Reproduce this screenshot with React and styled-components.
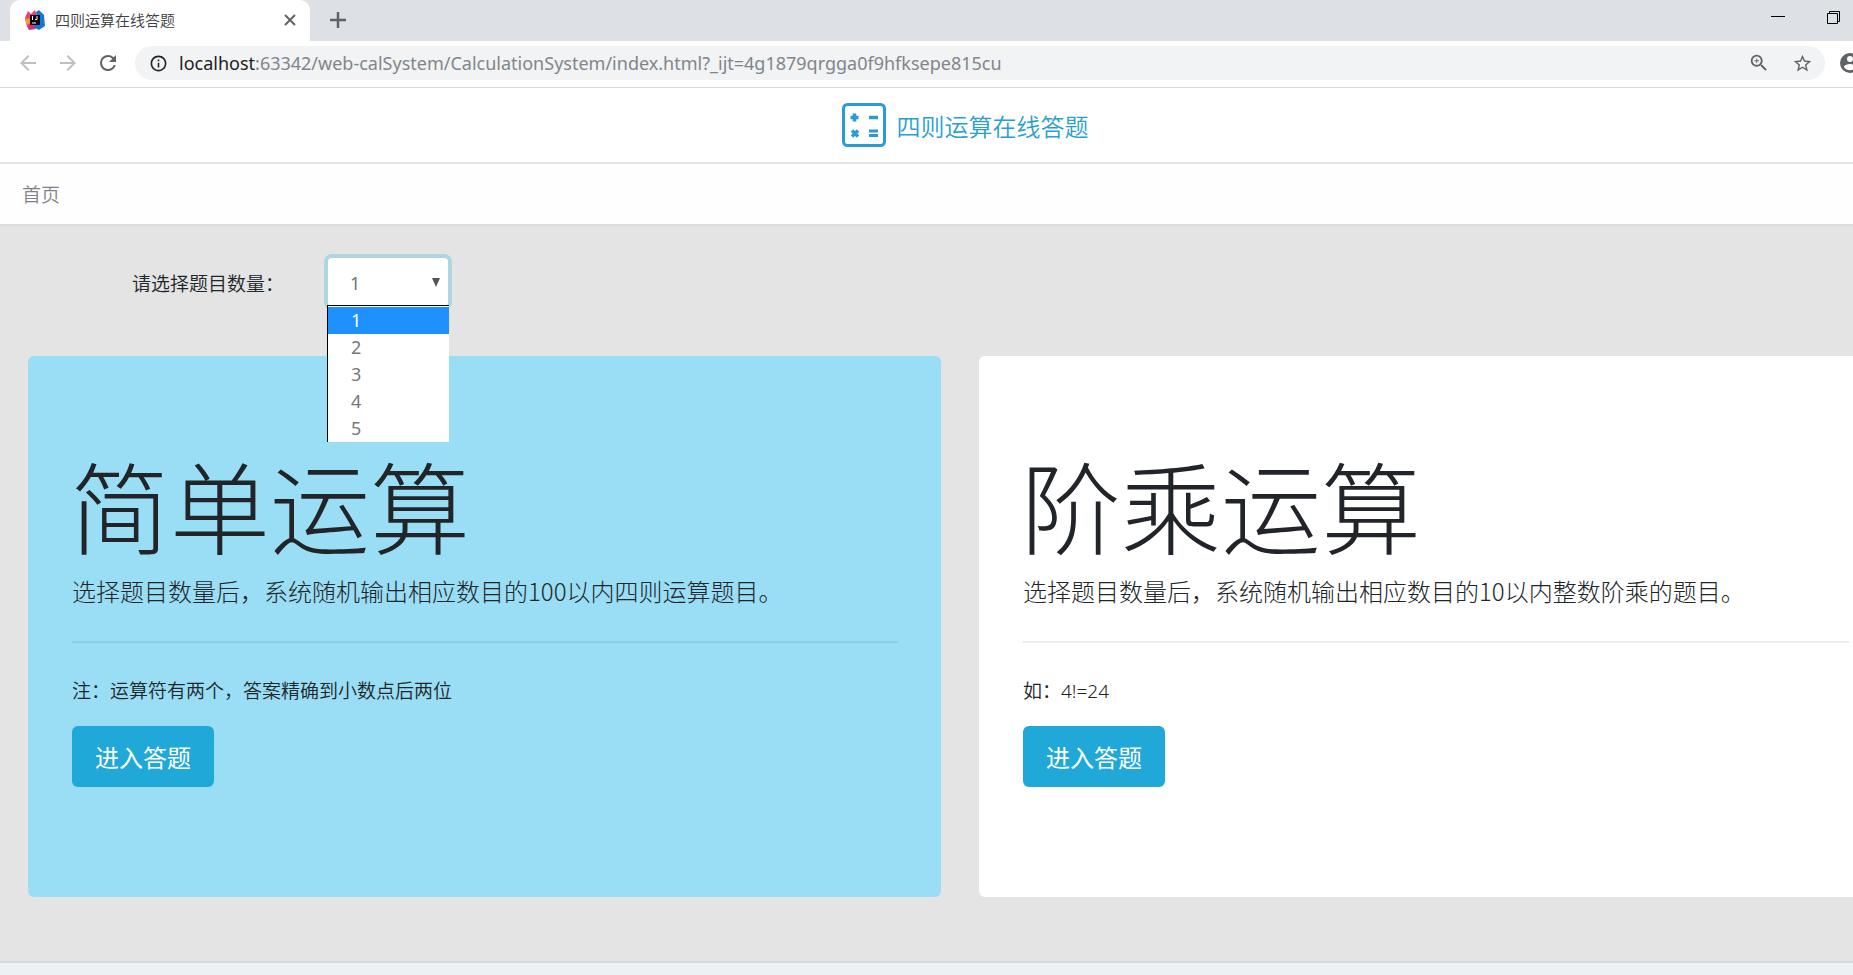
import React, { useState } from 'react'
import styled, { createGlobalStyle } from 'styled-components'

const GlobalStyle = createGlobalStyle`
  * { box-sizing: border-box; }
  body {
    margin: 0;
    font-family: 'Noto Sans', 'Noto Sans CJK SC', sans-serif;
    font-size: 19px;
    line-height: 29px;
    color: #212529;
    background: #edf1f4;
  }
  h1, p, ul { margin: 0; padding: 0; font-weight: inherit; }
  button, select { font-family: inherit; }
  svg { display: block; flex: none; }
`

const Viewport = styled.div`
  overflow: hidden;
`
// the window is a little wider than the screen, its right edge is cut off
const Window = styled.div`
  width: calc(100% + 67px);
`

/* browser chrome */
const TabStrip = styled.div`
  display: flex;
  align-items: flex-end;
  height: 41px;
  padding: 0 66px 0 10px;
  background: #dde1e6;
`
const Tab = styled.div`
  display: flex;
  align-items: center;
  width: 300px;
  height: 41px;
  padding: 0 12px 2px 15px;
  border-radius: 10px 10px 0 0;
  background: #fff;
  color: #3c4043;
`
const TabTitle = styled.span`
  flex: 1;
  margin-left: 10px;
  font-family: 'Noto Sans CJK SC', sans-serif;
  font-size: 15px;
  font-weight: 350;
`
const IconButton = styled.button`
  display: flex;
  align-items: center;
  justify-content: center;
  width: ${props => props.$size || 40}px;
  height: ${props => props.$size || 40}px;
  padding: 0;
  border: 0;
  background: none;
  color: ${props => props.$color || '#5f6368'};
`
const NewTab = styled(IconButton)`
  margin-left: 8px;
  padding-bottom: 2px;
`
const WindowButtons = styled.div`
  display: flex;
  gap: 16px;
  margin-left: auto;
  padding-bottom: 3px;
`
const Toolbar = styled.div`
  display: flex;
  align-items: center;
  height: 47px;
  padding: 0 58px 2px 8px;
  border-bottom: 1px solid #d5d7da;
  background: #fff;
`
const AddressBar = styled.div`
  display: flex;
  align-items: center;
  gap: 3px;
  flex: 1;
  height: 34px;
  margin: 0 13px 0 7px;
  padding: 0 3px 0 14px;
  border-radius: 17px;
  background: #f1f3f4;
`
const Url = styled.span`
  flex: 1;
  margin-left: 8px;
  font-family: 'Noto Sans', sans-serif;
  font-size: 18px;
  color: #80868b;
  white-space: nowrap;
  b { font-weight: 400; color: #202124; }
`

/* page */
const Header = styled.header`
  display: flex;
  align-items: center;
  justify-content: center;
  gap: 11px;
  height: 76px;
  padding-left: 10px;
  border-bottom: 2px solid #e1e3e5;
  background: #fff;
`
const Brand = styled.h1`
  padding-top: 4px;
  font-size: 24px;
  font-weight: 350;
  line-height: 36px;
  color: #2a9fd0;
`
const Nav = styled.nav`
  display: flex;
  align-items: center;
  height: 62px;
  padding: 2px 22px 0;
  border-bottom: 2px solid #d8dcdf;
  background: #fefefe;
  a { color: #808386; font-weight: 350; text-decoration: none; }
`
const Main = styled.main`
  padding: 32px 28px 64px;
  border-bottom: 2px solid #d5d9dc;
  background: #e4e4e4;
`
const Question = styled.div`
  display: flex;
  align-items: center;
  padding-left: 104px;
  margin-bottom: 50px;
`
const Label = styled.label`
  width: 196px;
  padding-top: 4px;
  font-weight: 350;
`
const Picker = styled.div`
  position: relative;
  width: 120px;
`
const Select = styled.select`
  appearance: none;
  display: block;
  width: 100%;
  height: 48px;
  padding: 2px 22px 0;
  border: 0;
  border-radius: 4px;
  outline: none;
  box-shadow: 0 0 0 4px #aed5e2;
  background: #fff;
  font-size: 18px;
  color: #777;
`
const Arrow = styled.svg`
  position: absolute;
  top: 20px;
  right: 8px;
  pointer-events: none;
`
const Options = styled.ul`
  position: absolute;
  z-index: 2;
  top: 47px;
  left: -1px;
  right: -1px;
  padding-top: 1px;
  border: solid #000;
  border-width: 1px 0 0 1px;
  background: #fff;
  list-style: none;
`
const Option = styled.li`
  padding-left: 23px;
  font-size: 18px;
  line-height: 27px;
  color: ${props => (props.$active ? '#fff' : '#777')};
  background: ${props => (props.$active ? '#1e90ff' : '#fff')};
`
const Cards = styled.div`
  display: grid;
  grid-template-columns: 1fr 1fr;
  gap: 38px;
`
const Card = styled.section`
  padding: 96px 43px 110px 44px;
  border-radius: 6px;
  background: ${props => props.$color};
`
const CardTitle = styled.h1`
  margin-left: -2px;
  font-size: 100px;
  font-weight: 200;
  line-height: 112px;
`
const Lead = styled.p`
  font-family: 'Noto Sans CJK SC', sans-serif;
  font-size: 24px;
  font-weight: 200;
  line-height: 36px;
  margin-top: 9px;
`
const Rule = styled.hr`
  margin: 32px 0 34px;
  border: 0;
  border-top: 2px solid rgba(0, 0, 0, 0.07);
`
const Note = styled.p`
  font-weight: 350;
`
const Enter = styled.button`
  height: 61px;
  margin-top: 20px;
  padding: 3px 23px 0;
  border: 0;
  border-radius: 6px;
  background: #20a8d8;
  color: #fff;
  font-size: 24px;
  line-height: 36px;
`

const modes = [
  {
    title: '简单运算',
    lead: '选择题目数量后，系统随机输出相应数目的100以内四则运算题目。',
    note: '注：运算符有两个，答案精确到小数点后两位',
    color: '#99def4',
  },
  {
    title: '阶乘运算',
    lead: '选择题目数量后，系统随机输出相应数目的10以内整数阶乘的题目。',
    note: '如：4!=24',
    color: '#fff',
  },
]
const counts = [1, 2, 3, 4, 5]

const Icon = ({ size = 24, d }) => (
  <svg width={size} height={size} viewBox="0 0 24 24" fill="currentColor"><path d={d} /></svg>
)

const Favicon = () => (
  <svg width="20" height="20" viewBox="0 0 20 20">
    <path d="M0 8l3-7 3 3 4-4 2 6-4 10-6 1z" fill="#ee3f6e" />
    <path d="M0 10l4-2 2 4-4 3z" fill="#f79a3e" />
    <path d="M11 2l3-2 5 5 1 11-6 4-6-3 4-8z" fill="#1676d2" />
    <path d="M2 16l6-2 3 5-7 1z" fill="#d42f72" />
    <rect x="5" y="5" width="10" height="10" fill="#0b0508" />
    <path d="M7.500 6v4M12 6v3.500h-2M7 13h4" stroke="#fff" fill="none" />
  </svg>
)

const Logo = () => (
  <svg width="44" height="44" viewBox="0 0 44 44" stroke="#2a9bd4" fill="none">
    <rect x="1.500" y="1.500" width="41" height="41" rx="4" strokeWidth="3" />
    <path d="M8.500 14.500h8M12.500 10.500v8M27 14.500h9" strokeWidth="3.500" />
    <path d="M27 28h9M27 32.500h9" strokeWidth="3" />
    <path d="M10 27.500l6 6M16 27.500l-6 6" strokeWidth="3.500" />
  </svg>
)

function App() {
  const [count, setCount] = useState(1)
  return (
    <Viewport>
      <GlobalStyle />
      <Window>
        <TabStrip>
          <Tab>
            <Favicon />
            <TabTitle>四则运算在线答题</TabTitle>
            <IconButton $size={16} aria-label="关闭">
              <svg width="12" height="12" viewBox="0 0 12 12" stroke="currentColor" strokeWidth="2"><path d="M1 1l10 10M11 1L1 11" /></svg>
            </IconButton>
          </Tab>
          <NewTab aria-label="新标签页">
            <svg width="16" height="16" viewBox="0 0 16 16" stroke="currentColor" strokeWidth="2.500"><path d="M8 0v16M0 8h16" /></svg>
          </NewTab>
          <WindowButtons>
            <IconButton aria-label="最小化" $color="#000">
              <svg width="14" height="14" viewBox="0 0 14 14" stroke="currentColor"><path d="M0 5.500h14" /></svg>
            </IconButton>
            <IconButton aria-label="还原" $color="#000">
              <svg width="14" height="14" viewBox="0 0 14 14" stroke="currentColor" fill="none"><path d="M.5 2.500h10v10H.5zM2.500 2.500v-2h10v10h-2" /></svg>
            </IconButton>
          </WindowButtons>
        </TabStrip>
        <Toolbar>
          <IconButton aria-label="后退" $color="#bdc0c4"><Icon d="M20 11H7.830l5.590-5.590L12 4l-8 8 8 8 1.410-1.410L7.830 13H20v-2z" /></IconButton>
          <IconButton aria-label="前进" $color="#bdc0c4"><Icon d="M12 4l-1.410 1.410L16.170 11H4v2h12.170l-5.580 5.590L12 20l8-8z" /></IconButton>
          <IconButton aria-label="刷新"><Icon d="M17.650 6.350A7.958 7.958 0 0 0 12 4a8 8 0 1 0 7.730 10h-2.080A6 6 0 1 1 12 6c1.660 0 3.140.69 4.220 1.780L13 11h7V4l-2.350 2.350z" /></IconButton>
          <AddressBar>
            <Icon size={19} d="M11 17h2v-6h-2v6zm1-15C6.480 2 2 6.480 2 12s4.480 10 10 10 10-4.480 10-10S17.520 2 12 2zm0 18a8 8 0 1 1 0-16 8 8 0 0 1 0 16zM11 9h2V7h-2v2z" />
            <Url><b>localhost</b>:63342/web-calSystem/CalculationSystem/index.html?_ijt=4g1879qrgga0f9hfksepe815cu</Url>
            <IconButton aria-label="缩放"><Icon size={22} d="M15.500 14h-.79l-.28-.27A6.470 6.470 0 0 0 16 9.500 6.500 6.500 0 1 0 9.500 16c1.610 0 3.090-.59 4.230-1.570l.27.28v.79l5 4.990L20.490 19l-4.990-5zm-6 0a4.500 4.500 0 1 1 0-9 4.500 4.500 0 0 1 0 9zM12 10h-2v2H9v-2H7V9h2V7h1v2h2v1z" /></IconButton>
            <IconButton aria-label="收藏"><Icon size={21} d="M22 9.240l-7.190-.62L12 2 9.190 8.630 2 9.240l5.460 4.730L5.820 21 12 17.270 18.180 21l-1.630-7.030L22 9.240zM12 15.400l-3.760 2.270 1-4.280-3.320-2.880 4.380-.38L12 6.100l1.710 4.040 4.380.38-3.320 2.880 1 4.280L12 15.400z" /></IconButton>
          </AddressBar>
          <IconButton $size={24} aria-label="用户"><Icon size={24} d="M12 2a10 10 0 1 0 0 20 10 10 0 0 0 0-20zm0 3a3 3 0 1 1 0 6 3 3 0 0 1 0-6zm0 14.200a7.200 7.200 0 0 1-6-3.220c.03-1.990 4-3.080 6-3.080s5.970 1.090 6 3.080a7.200 7.200 0 0 1-6 3.220z" /></IconButton>
        </Toolbar>
        <Header>
          <Logo />
          <Brand>四则运算在线答题</Brand>
        </Header>
        <Nav><a href="#">首页</a></Nav>
        <Main>
          <Question>
            <Label htmlFor="count">请选择题目数量：</Label>
            <Picker>
              <Select id="count" value={count} onChange={e => setCount(Number(e.target.value))}>
                {counts.map(n => <option key={n}>{n}</option>)}
              </Select>
              <Arrow width="8" height="9" viewBox="0 0 8 9"><path d="M0 0h8L4 9z" fill="#555" /></Arrow>
              <Options role="listbox">
                {counts.map(n => (
                  <Option key={n} role="option" $active={n === count} onClick={() => setCount(n)}>{n}</Option>
                ))}
              </Options>
            </Picker>
          </Question>
          <Cards>
            {modes.map(mode => (
              <Card key={mode.title} $color={mode.color}>
                <CardTitle>{mode.title}</CardTitle>
                <Lead>{mode.lead}</Lead>
                <Rule />
                <Note>{mode.note}</Note>
                <Enter>进入答题</Enter>
              </Card>
            ))}
          </Cards>
        </Main>
      </Window>
    </Viewport>
  )
}
export default App
